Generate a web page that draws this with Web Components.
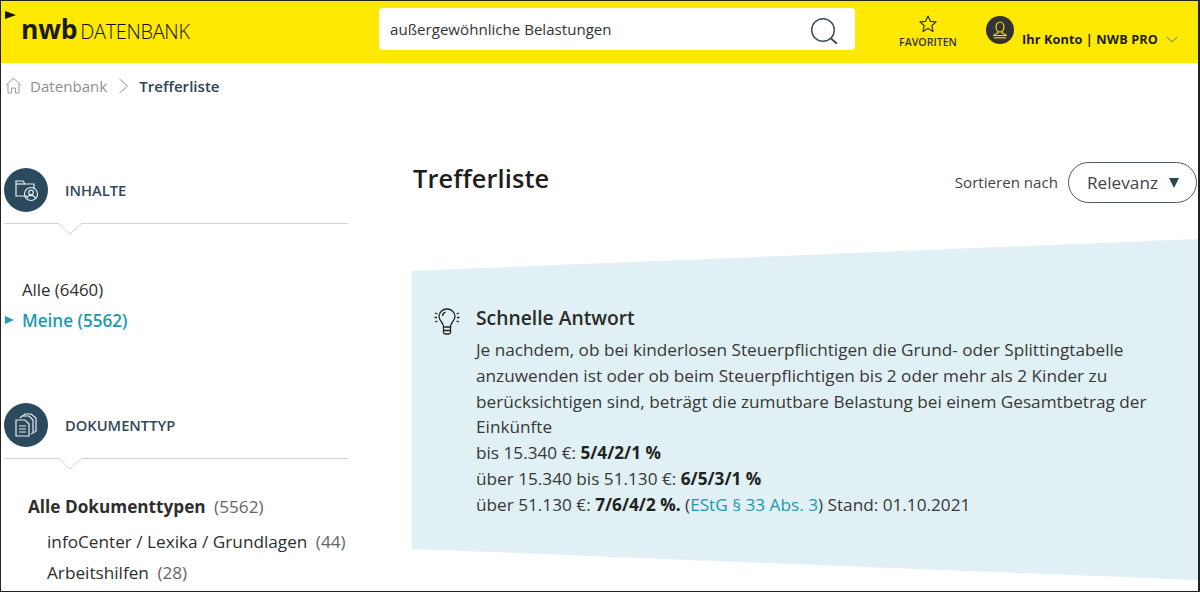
<!DOCTYPE html>
<html lang="de">
<head>
<meta charset="utf-8">
<title>Trefferliste</title>
<style>
  html, body { margin: 0; height: 100%; }
  body { font-family: "Open Sans", "Liberation Sans", sans-serif; color: #2b2b2b; background: #fff; }
  #page { box-sizing: border-box; width: 1200px; height: 592px; border: solid #222; border-width: 1px 2px 1px 1px; overflow: hidden; display: flex; flex-direction: column; }
</style>
</head>
<body>
<div id="page">
  <nwb-header></nwb-header>
  <nwb-crumbs></nwb-crumbs>
  <nwb-main>
    <nwb-sidebar slot="side"></nwb-sidebar>
    <nwb-results slot="content"></nwb-results>
  </nwb-main>
</div>

<script>
class NwbHeader extends HTMLElement {
  constructor() {
    super();
    this.attachShadow({ mode: 'open' });
    this.shadowRoot.innerHTML = `
      <style>
        :host { display: flex; flex: none; height: 62px; background: #ffe900; color: #1c1c1c; position: relative; align-items: flex-start; }
        .skip { position: absolute; left: 4px; top: 10px; width: 0; height: 0; border-left: 11px solid #111; border-top: 4px solid transparent; border-bottom: 4px solid transparent; }
        .logo { margin: 11px 0 0 20px; width: 358px; display: flex; align-items: baseline; gap: 3px; white-space: nowrap; line-height: 34px; }
        .logo b { font: 700 26.500px/34px "Open Sans", sans-serif; letter-spacing: -.2px; }
        .logo span { font: 300 19.900px/34px "Open Sans", sans-serif; letter-spacing: -.3px; color: #111; }
        .search { box-sizing: border-box; width: 476px; height: 42px; margin-top: 7px; background: #fff; border-radius: 4px; display: flex; align-items: center; justify-content: space-between; padding: 0 17px 0 11px; font-size: 15.100px; color: #333; }
        .fav { width: 72px; margin: 14px 0 0 37px; display: flex; flex-direction: column; align-items: center; font-size: 10.600px; font-weight: 600; line-height: 12px; color: #333; }
        .fav svg { margin-bottom: 3px; }
        .acct { display: flex; align-items: flex-start; margin: 15px 0 0 22px; }
        .acct .avatar { width: 28px; height: 28px; border-radius: 50%; background: #333; display: flex; align-items: center; justify-content: center; }
        .acct .name { font-size: 12.700px; font-weight: 700; margin: 14px 0 0 8px; line-height: 18px; white-space: nowrap; letter-spacing: .1px; }
        .acct .chev { margin: 20px 0 0 8px; }
      </style>
      <i class="skip"></i>
      <div class="logo"><b>nwb</b><span>DATENBANK</span></div>
      <div class="search">
        <span>außergewöhnliche Belastungen</span>
        <svg width="28" height="30" viewBox="0 0 28 30" fill="none" stroke="#3d4f5c" stroke-width="1.500"><circle cx="13" cy="16" r="11.300"/><path d="M21 24.500l6 5.300" stroke-width="2"/></svg>
      </div>
      <div class="fav">
        <svg width="18" height="18" viewBox="0 0 18 18" fill="none" stroke="#333" stroke-width="1.200" stroke-linejoin="round"><path d="M9 1l2.400 5.300 5.600.6-4.200 3.800 1.200 5.800L9 13.600l-5 2.900 1.200-5.800L1 6.900l5.600-.6z"/></svg>
        FAVORITEN
      </div>
      <div class="acct">
        <div class="avatar">
          <svg width="20" height="20" viewBox="0 0 20 20" fill="none" stroke="#ffe900" stroke-width="1.100"><ellipse cx="10" cy="7" rx="4" ry="5"/><path d="M8 11.700v1.300c-1.800.5-3.700 1-4.300 2.500h12.600c-.6-1.500-2.500-2-4.300-2.500v-1.300"/><path d="M3.800 17.800h12.400"/></svg>
        </div>
        <div class="name">Ihr Konto | NWB PRO</div>
        <svg class="chev" width="12" height="7" viewBox="0 0 12 7" fill="none" stroke="#6b6b3a" stroke-width="1"><path d="M1 1l5 5 5-5"/></svg>
      </div>`;
  }
}
customElements.define('nwb-header', NwbHeader);

class NwbCrumbs extends HTMLElement {
  constructor() {
    super();
    this.attachShadow({ mode: 'open' });
    this.shadowRoot.innerHTML = `
      <style>
        :host { display: flex; flex: none; box-sizing: border-box; height: 48px; padding: 0 0 3px 4px; align-items: center; font-size: 15.100px; color: #8f8f8f; }
        svg { flex: none; }
        .home { margin-right: 8px; }
        .sep { margin: 0 10px 0 11px; }
        b { color: #2d4454; font-weight: 600; }
      </style>
      <svg class="home" width="17" height="17" viewBox="0 0 17 17" fill="none" stroke="#999" stroke-width="1"><path d="M.8 8.500L8.500 1.200l7.700 7.300M3 7v9h3.500v-5h4v5H14V7"/></svg>
      <span>Datenbank</span>
      <svg class="sep" width="11" height="16" viewBox="0 0 11 16" fill="none" stroke="#999" stroke-width="1"><path d="M1.500 1l8 7-8 7"/></svg>
      <b>Trefferliste</b>`;
  }
}
customElements.define('nwb-crumbs', NwbCrumbs);

class NwbMain extends HTMLElement {
  constructor() {
    super();
    this.attachShadow({ mode: 'open' });
    this.shadowRoot.innerHTML = `
      <style>
        :host { display: grid; grid-template-columns: 411px 786px; flex: 1; min-height: 0; }
      </style>
      <slot name="side"></slot>
      <slot name="content"></slot>`;
  }
}
customElements.define('nwb-main', NwbMain);

// Abschnittskopf mit rundem Icon und Linie mit Kerbe
class NwbFacetHead extends HTMLElement {
  constructor() {
    super();
    this.attachShadow({ mode: 'open' });
    this.shadowRoot.innerHTML = `
      <style>
        :host { display: block; width: 344px; margin-left: 3px; }
        .row { display: flex; align-items: center; height: 44px; gap: 17px; font-size: 14.700px; font-weight: 600; color: #33475a; }
        .circle { width: 44px; height: 44px; border-radius: 50%; background: #2b4a5e; display: flex; align-items: center; justify-content: center; }
        .line { height: 1px; background: #d2d2d2; margin-top: 11px; position: relative; }
        svg.notch { position: absolute; left: 53px; top: 0; }
      </style>
      <div class="row">
        <div class="circle"><slot name="icon"></slot></div>
        <span><slot></slot></span>
      </div>
      <div class="line">
        <svg class="notch" width="26" height="13" viewBox="0 0 26 13"><path d="M1 0l12 11L25 0" fill="#fff" stroke="#d2d2d2" stroke-width="1"/></svg>
      </div>`;
  }
}
customElements.define('nwb-facet-head', NwbFacetHead);

class NwbSidebar extends HTMLElement {
  constructor() {
    super();
    this.attachShadow({ mode: 'open' });
    this.shadowRoot.innerHTML = `
      <style>
        :host { display: block; padding-top: 57px; font-size: 16.800px; color: #2e2e2e; }
        .scope { margin: 50px 0 0 21px; line-height: 31px; }
        .scope .on { color: #2399b0; font-weight: 600; font-size: 17.100px; position: relative; }
        .scope .on::before { content: ""; position: absolute; left: -17px; top: 11px; border-left: 9px solid #2399b0; border-top: 4px solid transparent; border-bottom: 4px solid transparent; }
        .second { margin-top: 67px; display: block; }
        .types { margin: 31px 0 0 27px; line-height: 31px; white-space: nowrap; font-size: 17.200px; }
        .types .all { font-weight: 700; height: 36px; line-height: 34px; }
        .types .all span { font-weight: 400; color: #666; margin-left: 4px; }
        .types .sub { margin-left: 19px; height: 31px; }
        .types .sub span { color: #666; margin-left: 4px; }
      </style>
      <nwb-facet-head>
        <svg slot="icon" width="26" height="26" viewBox="0 0 26 26" fill="none" stroke="#e6edf1" stroke-width="1.200"><path d="M14 19H3V4h7l2 3h9v5"/><path d="M3 7h9"/><circle cx="18" cy="17" r="6.500"/><circle cx="18" cy="15.500" r="2.300"/><path d="M13.800 21c.8-2 2.500-2.600 4.200-2.600s3.400.6 4.200 2.600"/></svg>
        INHALTE
      </nwb-facet-head>
      <div class="scope">
        <div>Alle (6460)</div>
        <div class="on">Meine (5562)</div>
      </div>
      <nwb-facet-head class="second">
        <svg slot="icon" width="26" height="26" viewBox="0 0 26 26" fill="none" stroke="#e6edf1" stroke-width="1.200"><path d="M10 4l2-2h6l5 4v13l-2 1.500"/><path d="M7 6l2-2h7l4 4v13l-2 1"/><path d="M3 8h9l4 4v12H3z" fill="#2b4a5e"/><path d="M6 14h7M6 17h7M6 20h7"/></svg>
        DOKUMENTTYP
      </nwb-facet-head>
      <div class="types">
        <div class="all">Alle Dokumenttypen <span>(5562)</span></div>
        <div class="sub">infoCenter / Lexika / Grundlagen <span>(44)</span></div>
        <div class="sub">Arbeitshilfen <span>(28)</span></div>
      </div>`;
  }
}
customElements.define('nwb-sidebar', NwbSidebar);

class NwbSort extends HTMLElement {
  constructor() {
    super();
    this.attachShadow({ mode: 'open' });
    this.shadowRoot.innerHTML = `
      <style>
        :host { display: flex; align-items: center; gap: 10px; font-size: 15.100px; color: #444; }
        .lbl { position: relative; top: -1px; }
        .pill { box-sizing: border-box; width: 129px; height: 41px; border: 1px solid #4a5a66; border-radius: 21px; display: flex; align-items: center; justify-content: space-between; padding: 0 17px 0 18px; font-size: 17.200px; color: #444; }
        .pill i { font-style: normal; border-top: 10px solid #2c4455; border-left: 5.500px solid transparent; border-right: 5.500px solid transparent; }
      </style>
      <span class="lbl">Sortieren nach</span>
      <div class="pill"><span>Relevanz</span><i></i></div>`;
  }
}
customElements.define('nwb-sort', NwbSort);

class NwbAnswer extends HTMLElement {
  constructor() {
    super();
    this.attachShadow({ mode: 'open' });
    this.shadowRoot.innerHTML = `
      <style>
        :host { display: flex; box-sizing: border-box; height: 341px; background: #e0f0f4; clip-path: polygon(0 32px, 100% 0, 100% 100%, 0 310px); padding: 65px 30px 0 22px; gap: 16px; }
        svg { flex: none; margin-top: 2px; }
        h3 { margin: 0 0 6px; font-size: 19.300px; font-weight: 600; line-height: 27px; color: #2b2b2b; }
        .text { font-size: 17.200px; line-height: 25.800px; color: #383838; white-space: nowrap; }
      </style>
      <svg width="26" height="29" viewBox="0 0 26 29" fill="none" stroke="#222" stroke-width="1.300"><path d="M9.500 21c0-2.500-1-3.800-2-5-1.100-1.300-2.500-3-2.500-5.500C5 6.500 8.500 3 13 3s8 3.500 8 7.500c0 2.500-1.400 4.200-2.500 5.500-1 1.200-2 2.500-2 5z"/><path d="M9.500 21v5.500c0 1 .8 1.500 1.700 1.500h3.600c.9 0 1.700-.5 1.700-1.500V21M9.500 24.500h7M8.500 10c.2-2 1.500-3.300 3-3.800"/><path d="M1 7l2.500 1M.5 11.500H3M1 16l2.500-1M25 7l-2.500 1M25.500 11.500H23M25 16l-2.500-1"/></svg>
      <div>
        <h3>Schnelle Antwort</h3>
        <div class="text"><slot></slot></div>
      </div>`;
  }
}
customElements.define('nwb-answer', NwbAnswer);

class NwbResults extends HTMLElement {
  constructor() {
    super();
    this.attachShadow({ mode: 'open' });
    this.shadowRoot.innerHTML = `
      <style>
        :host { display: block; padding-top: 51px; }
        .top { display: flex; justify-content: space-between; align-items: center; height: 41px; padding: 0 1px; }
        h1 { margin: 0; font-size: 25.400px; font-weight: 600; color: #1d1d1d; letter-spacing: .1px; position: relative; top: -5px; }
        nwb-answer { margin-top: 36px; }
        a { color: #2399b0; text-decoration: none; }
        b { color: #222; }
      </style>
      <div class="top">
        <h1>Trefferliste</h1>
        <nwb-sort></nwb-sort>
      </div>
      <nwb-answer>
        Je nachdem, ob bei kinderlosen Steuerpflichtigen die Grund- oder Splittingtabelle<br>
        anzuwenden ist oder ob beim Steuerpflichtigen bis 2 oder mehr als 2 Kinder zu<br>
        berücksichtigen sind, beträgt die zumutbare Belastung bei einem Gesamtbetrag der<br>
        Einkünfte<br>
        bis 15.340 €: <b>5/4/2/1 %</b><br>
        über 15.340 bis 51.130 €: <b>6/5/3/1 %</b><br>
        über 51.130 €: <b>7/6/4/2 %.</b> (<a href="#">EStG § 33 Abs. 3</a>) Stand: 01.10.2021
      </nwb-answer>`;
  }
}
customElements.define('nwb-results', NwbResults);
</script>
</body>
</html>
